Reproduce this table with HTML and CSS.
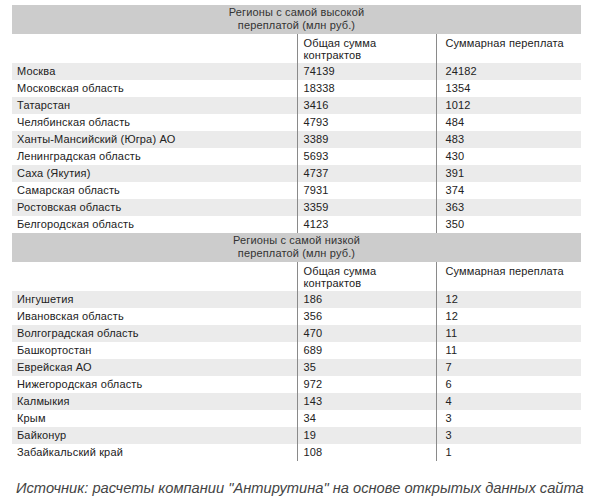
FILE: index.html
```html
<!DOCTYPE html>
<html lang="ru">
<head>
<meta charset="utf-8">
<link rel="stylesheet" href="styles.css">
</head>
<body>
<table class="data">
  <colgroup><col class="c1"><col class="c2"><col class="c3"></colgroup>
  <tbody>
    <tr class="head"><th colspan="3">Регионы с самой высокой<br>переплатой (млн руб.)</th></tr>
    <tr class="sub"><td></td><td>Общая сумма<br>контрактов</td><td>Суммарная переплата</td></tr>
    <tr class="odd"><td>Москва</td><td>74139</td><td>24182</td></tr>
    <tr><td>Московская область</td><td>18338</td><td>1354</td></tr>
    <tr class="odd"><td>Татарстан</td><td>3416</td><td>1012</td></tr>
    <tr><td>Челябинская область</td><td>4793</td><td>484</td></tr>
    <tr class="odd"><td>Ханты-Мансийский (Югра) АО</td><td>3389</td><td>483</td></tr>
    <tr><td>Ленинградская область</td><td>5693</td><td>430</td></tr>
    <tr class="odd"><td>Саха (Якутия)</td><td>4737</td><td>391</td></tr>
    <tr><td>Самарская область</td><td>7931</td><td>374</td></tr>
    <tr class="odd"><td>Ростовская область</td><td>3359</td><td>363</td></tr>
    <tr><td>Белгородская область</td><td>4123</td><td>350</td></tr>
    <tr class="head"><th colspan="3">Регионы с самой низкой<br>переплатой (млн руб.)</th></tr>
    <tr class="sub"><td></td><td>Общая сумма<br>контрактов</td><td>Суммарная переплата</td></tr>
    <tr class="odd"><td>Ингушетия</td><td>186</td><td>12</td></tr>
    <tr><td>Ивановская область</td><td>356</td><td>12</td></tr>
    <tr class="odd"><td>Волгоградская область</td><td>470</td><td>11</td></tr>
    <tr><td>Башкортостан</td><td>689</td><td>11</td></tr>
    <tr class="odd"><td>Еврейская АО</td><td>35</td><td>7</td></tr>
    <tr><td>Нижегородская область</td><td>972</td><td>6</td></tr>
    <tr class="odd"><td>Калмыкия</td><td>143</td><td>4</td></tr>
    <tr><td>Крым</td><td>34</td><td>3</td></tr>
    <tr class="odd"><td>Байконур</td><td>19</td><td>3</td></tr>
    <tr><td>Забайкальский край</td><td>108</td><td>1</td></tr>
  </tbody>
</table>
<p class="source">Источник: расчеты компании "Антирутина" на основе открытых данных сайта</p>
</body>
</html>
```
FILE: styles.css
```css
html, body {
  margin: 0;
  padding: 0;
  background: #fff;
}
body {
  padding: 5px 0 0 12px;
  font-family: "Liberation Sans", Arial, sans-serif;
}
.data {
  border-collapse: collapse;
  width: 569px;
  table-layout: fixed;
  font-size: 11px;
  letter-spacing: 0.15px;
  line-height: 13px;
  color: #222;
}
.c1 { width: 285px; }
.c2 { width: 139px; }
.c3 { width: 145px; }
.data td {
  padding: 2px 5px 2px 5px;
  vertical-align: top;
  text-align: left;
  background: #fff;
}
.data td + td {
  border-left: 1px solid #8a8a8a;
  padding-left: 6px;
}
.data td + td + td {
  padding-left: 9px;
}
.data tr.odd td {
  background: #ebebeb;
}
.head th {
  background: #cccccc;
  font-weight: normal;
  color: #333;
  text-align: center;
  padding: 1px 0 2px;
}
.sub td {
  line-height: 12px;
  padding-top: 3px;
  padding-bottom: 2px;
}
.source {
  margin: 19px 0 0 4px;
  font-style: italic;
  font-size: 14.7px;
  line-height: 17px;
  color: #444;
}
```
